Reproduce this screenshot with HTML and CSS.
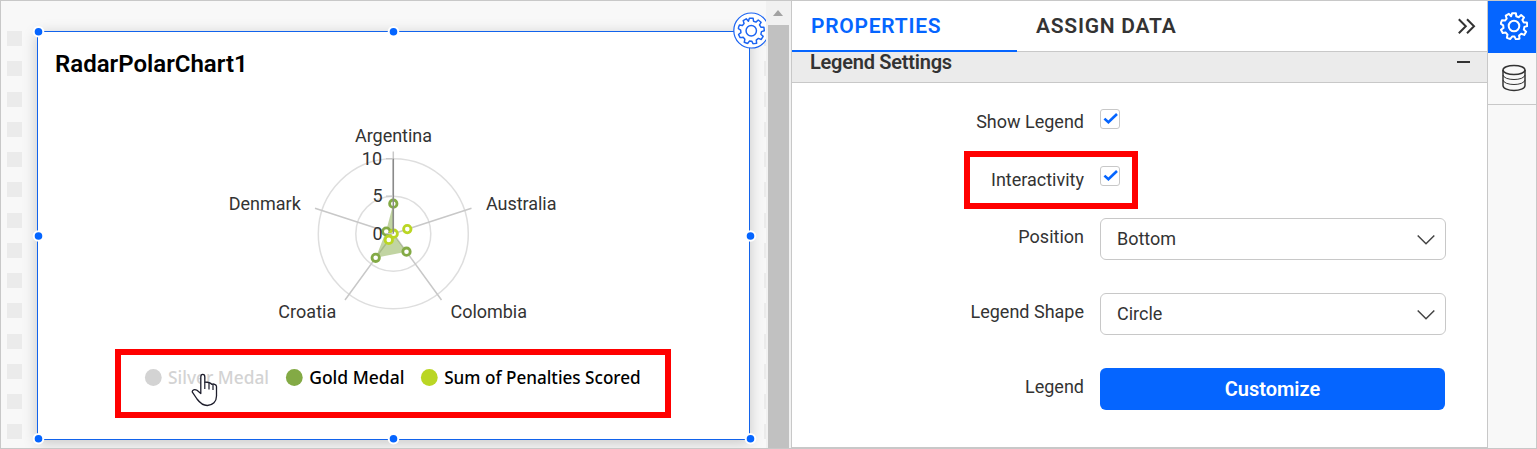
FILE: index.html
```html
<!DOCTYPE html>
<html lang="en">
<head>
<meta charset="utf-8">
<title>Dashboard designer</title>
<link rel="stylesheet" href="styles.css">
</head>
<body>
<svg class="defs" width="0" height="0" aria-hidden="true">
  <symbol id="gear" viewBox="0 0 28 28">
    <path fill="none" stroke="currentColor" stroke-linejoin="round" d="M12.1 1.2H15.9L16.3 4.3L18.8 5.2L21.1 3L24 5.4L22.4 8.1L23.8 10.4L26.9 10.4L27.3 14L24.4 14.9L23.8 17.6L26.1 19.7L24.2 22.9L21.3 21.8L19.1 23.6L19.5 26.7L15.9 27.4L14.5 24.6L12.1 24.5L10.3 27L6.9 25.7L7.5 22.6L5.8 20.6L2.7 21L1 17.8L3.5 15.9L3.2 13.3L.6 11.6L2 8.2L5 8.6L6.7 6.7L5.8 3.7L8.9 1.9L11.1 4.3Z"/>
    <circle cx="14" cy="14" r="5.3" fill="none" stroke="currentColor"/>
  </symbol>
</svg>
<div class="app">
  <main class="canvas">
    <div class="dots"><i></i><i></i><i></i><i></i><i></i><i></i><i></i><i></i><i></i><i></i><i></i><i></i><i></i><i></i></div>
    <section class="widget">
      <h1 class="widget-title"><span>RadarPolarChart1</span></h1>
      <svg class="chart" width="711" height="320" viewBox="38 88 711 320">
        <g fill="none" stroke="#dedede" stroke-width="1.5">
          <circle cx="393.3" cy="233.7" r="37.5"/><circle cx="393.3" cy="233.7" r="75"/>
        </g>
        <path d="M393.3 233.7V151.5M393.3 233.7L471.5 208.3M393.3 233.7L441.5 300M393.3 233.7L345 300M393.3 233.7L315 208.3" stroke="#c8c8c8" stroke-width="1.5" fill="none"/>
        <path d="M393.3 203.7L393.3 233.7L406.5 251.7L375.7 257.8L386 231.5Z" fill="#83aa45" fill-opacity=".5"/>
        <g fill="#fff" stroke="#83aa45" stroke-width="2.8">
          <circle cx="393.3" cy="203.7" r="3.7"/><circle cx="406.5" cy="251.7" r="3.7"/><circle cx="375.7" cy="257.8" r="3.7"/><circle cx="386.3" cy="231.5" r="3.7"/>
        </g>
        <g fill="#fff" stroke="#bad624" stroke-width="2.8">
          <circle cx="407.3" cy="229.1" r="3.7"/><circle cx="388.8" cy="239.9" r="3.7"/><circle cx="393.7" cy="233.7" r="3.7"/>
        </g>
        <path d="M393.3 158.7V233.7" stroke="#8a8a8a" stroke-width="1.5"/>
        <path d="M386 158.7H393M386 196.2H393M386 233.7H393" stroke="#c8c8c8" stroke-width="1.2"/>
        <g class="axis-label">
          <text x="355" y="142" textLength="77">Argentina</text>
          <text x="486" y="210" textLength="70.5">Australia</text>
          <text x="450.5" y="318" textLength="76.5">Colombia</text>
          <text x="278.3" y="318" textLength="58">Croatia</text>
          <text x="228.8" y="210" textLength="72">Denmark</text>
          <text x="382" y="165" text-anchor="end">10</text>
          <text x="382.5" y="202" text-anchor="end">5</text>
          <text x="382.5" y="240" text-anchor="end">0</text>
        </g>
        <circle cx="153.3" cy="377.5" r="8.4" fill="#d3d3d3"/>
        <circle cx="294.3" cy="377.5" r="8.4" fill="#83aa45"/>
        <circle cx="429.3" cy="377.5" r="8.4" fill="#bad624"/>
        <g class="legend-label">
          <text class="muted" x="168" y="384" textLength="101" lengthAdjust="spacingAndGlyphs">Silver Medal</text>
          <text x="309.2" y="384" textLength="95.3" lengthAdjust="spacingAndGlyphs">Gold Medal</text>
          <text x="444.2" y="384" textLength="196.5" lengthAdjust="spacingAndGlyphs">Sum of Penalties Scored</text>
        </g>
      </svg>
    </section>
    <div class="dots dots-right"><i></i><i></i><i></i><i></i><i></i><i></i><i></i><i></i><i></i><i></i><i></i><i></i><i></i><i></i></div>
    <svg class="selection" width="765" height="447" viewBox="1 1 765 447">
      <g fill="#0565ff" stroke="#fff" stroke-width="2">
        <circle cx="38.5" cy="31.7" r="4.8"/><circle cx="393.5" cy="31.7" r="4.8"/>
        <circle cx="38.5" cy="236" r="4.8"/><circle cx="750.5" cy="236" r="4.8"/>
        <circle cx="38.5" cy="438.7" r="4.8"/><circle cx="393.5" cy="438.7" r="4.8"/><circle cx="750.5" cy="438.7" r="4.8"/>
      </g>
      <circle cx="751.3" cy="30.5" r="17.5" fill="#fff" stroke="#1b64f2" stroke-width="1.2"/>
      <use href="#gear" x="737.5" y="17" width="27.5" height="27.5" color="#1b64f2" stroke-width="1.5"/>
      <rect x="118" y="352" width="550" height="63" fill="none" stroke="#f00" stroke-width="6"/>
      <path d="M200.8 393.5L197 390.3C194.5 388.9 192.3 390 192.2 391.8L197 399C200 403 203 405.5 207.3 405.5C212.8 405.5 216.5 401.5 216.5 396V386.5C216.5 384.2 213.2 383.6 211.8 384.3C210.5 382.6 208.5 382 204.8 382V377C204.8 373.5 200.8 373.5 200.8 377Z" fill="#fff" stroke="#1c1c2b" stroke-width="1.3" stroke-linejoin="round"/>
      <path d="M204.8 382V389M209 383V389.5M213 384.5V390" stroke="#1c1c2b" stroke-width="1.2"/>
    </svg>
  </main>
  <div class="scrollbar"><span class="arrow"></span><span class="thumb"></span></div>
  <aside class="panel">
    <nav class="tabs">
      <div class="tab active">PROPERTIES</div>
      <div class="tab assign">ASSIGN DATA</div>
      <svg class="collapse" width="20" height="20" viewBox="0 0 20 20"><path d="M1.8 2.2L8.8 9.2L1.8 16.2M10 2.2L17 9.2L10 16.2" fill="none" stroke="#333" stroke-width="2"/></svg>
    </nav>
    <div class="section-head"><span>Legend Settings</span><i></i></div>
    <div class="form">
      <div class="row show"><label>Show Legend</label><span class="check"><svg width="18" height="18" viewBox="0 0 18 18"><path d="M3.4 8.6L7.4 12.3L16 4" fill="none" stroke="#0565ff" stroke-width="2.6"/></svg></span></div>
      <div class="row inter"><label>Interactivity</label><span class="check"><svg width="18" height="18" viewBox="0 0 18 18"><path d="M3.4 8.6L7.4 12.3L16 4" fill="none" stroke="#0565ff" stroke-width="2.6"/></svg></span><b class="highlight"></b></div>
      <div class="row position"><label>Position</label><div class="select"><span>Bottom</span><svg width="18" height="12" viewBox="0 0 18 12"><path d="M.7 1.5L9 9.8L17.3 1.5" fill="none" stroke="#444" stroke-width="1.5"/></svg></div></div>
      <div class="row shape"><label>Legend Shape</label><div class="select"><span>Circle</span><svg width="18" height="12" viewBox="0 0 18 12"><path d="M.7 1.5L9 9.8L17.3 1.5" fill="none" stroke="#444" stroke-width="1.5"/></svg></div></div>
      <div class="row legend"><label>Legend</label><button class="customize">Customize</button></div>
    </div>
  </aside>
  <nav class="rail">
    <div class="rail-item on"><svg width="28" height="28" stroke-width="2"><use href="#gear"/></svg></div>
    <div class="rail-item data"><svg width="24" height="28" viewBox="0 0 24 28" fill="none" stroke="#333" stroke-width="1.5"><ellipse cx="12" cy="6" rx="11" ry="4.5"/><path d="M1 6V21.5C1 28 23 28 23 21.5V6"/><path d="M1 11C2 17 22 17 23 11M1 16C2 22 22 22 23 16" stroke-width="1"/></svg></div>
  </nav>
</div>
</body>
</html>
```

FILE: styles.css
```css
* { box-sizing: border-box; }
body { margin: 0; font-family: Roboto, "Liberation Sans", sans-serif; color: #333; }
.defs { display: block; }
.app { display: grid; grid-template-columns: 765px 25px 696px 49px; width: 1537px; height: 449px; border: 1px solid #c8c8c8; overflow: hidden; background: #fff; }
.canvas { position: relative; display: flex; overflow: hidden; background: #f8f8f8; height: 447px; }
.dots { width: 36px; padding: 30px 0 0 6px; flex: none; display: flex; flex-direction: column; gap: 15.25px; }
.dots i { display: block; flex: none; width: 15px; height: 15px; background: #ebebeb; }
.dots-right { padding-left: 14px; }
.widget { flex: none; width: 713px; height: 409px; margin-top: 30px; border: 1px solid #1263ec; background: #fff; box-shadow: 0 3px 14px rgba(0,0,0,.2); }
.widget-title { height: 56px; margin: 0; padding: 17px 0 0 17px; font-size: 24px; line-height: 30px; font-weight: 600; color: #000; }
.chart { display: block; }
.axis-label { font-size: 18px; fill: #333; }
.legend-label { font: 500 17.5px "Noto Sans", "Open Sans", sans-serif; fill: #000; }
.legend-label .muted { fill: #d3d3d3; }
.selection { position: absolute; left: 0; top: 0; }
.scrollbar { display: flex; flex-direction: column; align-items: center; background: #f1f1f1; border-right: 1px solid #f1f1f1; }
.arrow { margin-top: 9px; border: 5.5px solid transparent; border-top: 0; border-bottom: 6px solid #a2a2a2; }
.thumb { width: 21px; height: 423px; margin-top: 9px; background: #c1c1c1; }
.panel { border-left: 1px solid #c8c8c8; border-bottom: 1px solid #c8c8c8; height: 447px; }
.tabs { display: flex; height: 51px; border-bottom: 1px solid #c8c8c8; font-size: 21px; line-height: 51px; font-weight: 600; letter-spacing: .75px; }
.tab.active { width: 225px; padding-left: 19px; height: 51px; border-bottom: 2px solid #0565ff; color: #0565ff; }
.tab.assign { width: 440px; padding-left: 19px; }
.collapse { margin-top: 16px; }
.section-head { display: flex; justify-content: space-between; height: 31px; padding: 0 17px 0 18px; border-bottom: 1px solid #c8c8c8; background: #ebebeb; font-size: 20px; font-weight: 600; letter-spacing: -.25px; line-height: 21px; }
.section-head i { width: 13px; height: 2px; margin-top: 9px; background: #333; }
.form { display: flex; flex-direction: column; padding-top: 26px; font-size: 18px; }
.row { position: relative; display: grid; grid-template-columns: 292px 346px; column-gap: 16px; }
.row label { text-align: right; line-height: 24px; }
.show, .inter { height: 57px; }
.show label { padding-top: 1px; }
.inter label { padding-top: 2px; }
.position, .shape { height: 75px; }
.position { margin-top: -5px; }
.check { width: 20px; height: 20px; border: 1px solid #c8c8c8; border-radius: 3px; }
.check svg { display: block; }
.highlight { position: absolute; left: 172px; top: -15px; width: 174px; height: 58px; border: 6px solid #f00; }
.position label, .shape label, .legend label { padding-top: 7px; }
.select { display: flex; justify-content: space-between; height: 42px; padding: 0 10px 0 16px; border: 1px solid #c8c8c8; border-radius: 6px; line-height: 40px; }
.select svg { margin-top: 15px; }
.customize { width: 345px; height: 42px; border: 0; border-radius: 6px; background: #0565ff; color: #fff; font: 600 20px Roboto, sans-serif; }
.rail { border-left: 1px solid #c8c8c8; background: #f8f8f8; }
.rail-item { display: flex; align-items: center; justify-content: center; height: 52px; }
.on { color: #fff; background: #0565ff; padding: 0 0 2px 4px; }
.data { border-bottom: 1px solid #c8c8c8; padding: 0 0 2px 4px; }
```
